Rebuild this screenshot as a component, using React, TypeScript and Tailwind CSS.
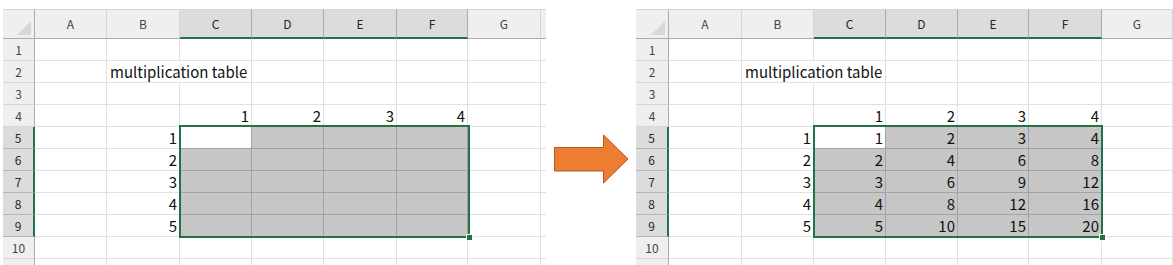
import React from 'react';

const LETTERS = ['A', 'B', 'C', 'D', 'E', 'F', 'G'];
const ROWS = [1, 2, 3, 4, 5, 6, 7, 8, 9, 10];

// selection C5:F9 -> columns 3..6, rows 5..9
const inSel = (r: number, c: number) => r >= 5 && r <= 9 && c >= 3 && c <= 6;

function cellText(r: number, c: number, filled: boolean): string {
  if (r === 4 && c >= 3 && c <= 6) return String(c - 2);
  if (r >= 5 && r <= 9 && c === 2) return String(r - 4);
  if (filled && inSel(r, c)) return String((r - 4) * (c - 2));
  return '';
}

function Corner() {
  return (
    <div className="relative border-t border-b border-r border-t-[#d5d5d5] border-b-[#ababab] border-r-[#ababab] bg-[#efefef]">
      <svg className="absolute right-[3px] bottom-[3px]" width="14" height="14" viewBox="0 0 14 14">
        <polygon points="14,0 14,14 0,14" fill="#d7d7d7" />
      </svg>
    </div>
  );
}

function ColHeader({ c }: { c: number }) {
  const sel = c >= 3 && c <= 6;
  return (
    <div
      className={
        sel
          ? 'flex items-center justify-center border-t border-r border-b-2 border-t-[#d5d5d5] border-r-[#ababab] border-b-[#217346] bg-[#dcdcdc] text-[12px] text-[#262626]'
          : 'flex items-center justify-center border-t border-r border-b border-t-[#d5d5d5] border-r-[#d5d5d5] border-b-[#ababab] bg-[#efefef] text-[12px] text-[#444]'
      }
    >
      {LETTERS[c - 1]}
    </div>
  );
}

function RowHeader({ r }: { r: number }) {
  const sel = r >= 5 && r <= 9;
  return (
    <div
      className={
        sel
          ? 'flex items-center justify-center border-b border-r-2 border-b-[#b5b5b5] border-r-[#217346] bg-[#dcdcdc] text-[12px] text-[#262626]'
          : 'flex items-center justify-center border-b border-r border-b-[#d5d5d5] border-r-[#ababab] bg-[#efefef] text-[12px] text-[#444]'
      }
    >
      {r}
    </div>
  );
}

function Cell({ r, c, filled }: { r: number; c: number; filled: boolean }) {
  const sel = inSel(r, c);
  const active = r === 5 && c === 3;
  const text = cellText(r, c, filled);
  let cls = 'flex items-center whitespace-nowrap border-r border-b text-[15px] leading-none text-[#111] ';
  if (sel && !active) cls += 'bg-[#c6c6c6] border-[#a3a3a3] justify-end pr-[2px]';
  else if (active) cls += 'border-[#a3a3a3] justify-end pr-[2px]';
  else if (r === 2 && c === 2) cls += 'border-b-[#e1e1e1] border-r-transparent justify-start pl-[3px]';
  else cls += 'border-[#e1e1e1] justify-end pr-[2px]';
  return <div className={cls}>{r === 2 && c === 2 ? 'multiplication table' : text}</div>;
}

type SheetProps = {
  grid: string;
  overlay: string;
  filled: boolean;
  extraCol: boolean;
};

function Sheet({ grid, overlay, filled, extraCol }: SheetProps) {
  const cols = [1, 2, 3, 4, 5, 6, 7];
  return (
    <div className={'relative mt-[9px] ' + grid}>
      <Corner />
      {cols.map((c) => (
        <ColHeader key={c} c={c} />
      ))}
      {extraCol && <div className="border-t border-b border-t-[#d5d5d5] border-b-[#ababab] bg-[#efefef]" />}

      {ROWS.map((r) => (
        <React.Fragment key={r}>
          <RowHeader r={r} />
          {cols.map((c) => (
            <Cell key={c} r={r} c={c} filled={filled} />
          ))}
          {extraCol && <div className="border-b border-[#e1e1e1]" />}
        </React.Fragment>
      ))}

      {/* partial 11th row */}
      <div className="border-r border-r-[#ababab] bg-[#efefef]" />
      {cols.map((c) => (
        <div key={c} className="border-r border-[#e1e1e1]" />
      ))}
      {extraCol && <div />}

      {/* selection outline */}
      <div className={'pointer-events-none absolute border-2 border-[#217346] ' + overlay}>
        <div className="absolute -right-[5px] -bottom-[5px] h-[7px] w-[7px] border border-white bg-[#217346]" />
      </div>
    </div>
  );
}

function Arrow() {
  return (
    <div className="w-[90px] shrink-0">
      <svg width="90" height="265" viewBox="0 0 90 265">
        <polygon
          points="8.5,147.5 57.5,147.5 57.5,135 82,159 57.5,183 57.5,171 8.5,171"
          fill="#ed7d31"
          stroke="#ae5a21"
          strokeWidth="1"
        />
      </svg>
    </div>
  );
}

export default function App() {
  return (
    <div className="flex h-[265px] w-[1173px] items-start overflow-hidden bg-white font-['Noto_Sans_CJK_KR','Noto_Sans',sans-serif]">
      <div className="ml-[3px] w-[543px] shrink-0">
        <Sheet
          grid="grid grid-cols-[32px_72px_73px_72px_72px_73px_71px_73px_5px] grid-rows-[30px_repeat(10,22px)_7px]"
          overlay="left-[176px] top-[116px] h-[113px] w-[291px]"
          filled={false}
          extraCol
        />
      </div>
      <Arrow />
      <div className="w-[537px] shrink-0">
        <Sheet
          grid="grid grid-cols-[33px_73px_72px_72px_72px_71px_73px_71px] grid-rows-[30px_repeat(10,22px)_7px]"
          overlay="left-[177px] top-[116px] h-[113px] w-[290px]"
          filled
          extraCol={false}
        />
      </div>
    </div>
  );
}
